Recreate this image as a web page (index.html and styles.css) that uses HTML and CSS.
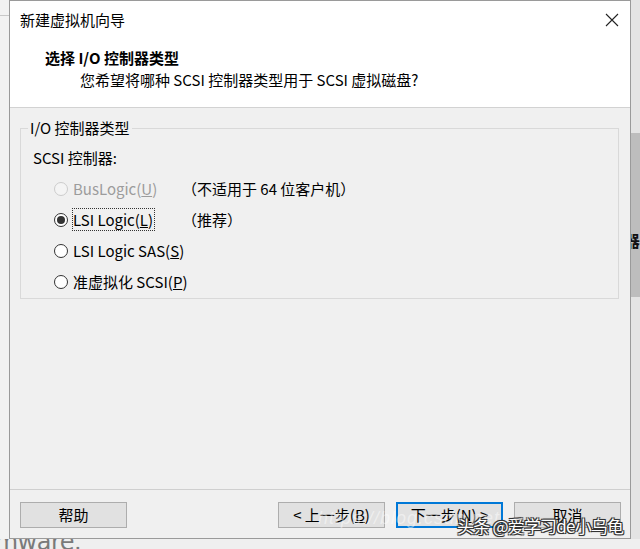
FILE: index.html
```html
<!DOCTYPE html>
<html lang="zh-CN">
<head>
<meta charset="utf-8">
<title>新建虚拟机向导</title>
<link rel="stylesheet" href="styles.css">
</head>
<body>
<div class="screen">
  <div class="top">
    <div class="side left"><div class="side-line"></div></div>
    <div class="dialog">
      <div class="titlebar">
        <span class="title">新建虚拟机向导</span>
        <svg class="close" width="14" height="14" viewBox="0 0 14 14"><path d="M1 1 L13 13 M13 1 L1 13" stroke="#222" stroke-width="1.1" fill="none"/></svg>
      </div>
      <div class="header">
        <div class="h-title">选择 I/O 控制器类型</div>
        <div class="h-sub">您希望将哪种 SCSI 控制器类型用于 SCSI 虚拟磁盘?</div>
      </div>
      <div class="body">
        <fieldset class="group">
          <legend class="legend">I/O 控制器类型</legend>
          <div class="label">SCSI 控制器:</div>
          <div class="row disabled">
            <span class="radio"></span>
            <span class="opt">BusLogic(<u>U</u>)</span>
            <span class="note">（不适用于 64 位客户机）</span>
          </div>
          <div class="row">
            <span class="radio checked"></span>
            <span class="opt"><span class="focus">LSI Logic(<u>L</u>)</span></span>
            <span class="note">（推荐）</span>
          </div>
          <div class="row">
            <span class="radio"></span>
            <span class="opt">LSI Logic SAS(<u>S</u>)</span>
            <span class="note"></span>
          </div>
          <div class="row">
            <span class="radio"></span>
            <span class="opt">准虚拟化 SCSI(<u>P</u>)</span>
            <span class="note"></span>
          </div>
        </fieldset>
      </div>
      <div class="footer">
        <button class="btn">帮助</button>
        <div class="btn-group">
          <button class="btn">&lt; 上一步(<u>B</u>)</button>
          <button class="btn default">下一步(<u>N</u>) &gt;</button>
          <button class="btn">取消</button>
        </div>
      </div>
    </div>
    <div class="side right">
      <div class="band"><span class="behind">器</span></div>
    </div>
  </div>
  <div class="bottom"><span class="vmware">vmware.</span></div>
  <div class="wm-faint">https://blog.csdn.net</div>
  <div class="watermark">头条 @爱学习de小乌龟</div>
</div>
</body>
</html>
```

FILE: styles.css
```css
* { box-sizing: border-box; }
html, body { margin: 0; padding: 0; }
body {
  font-family: "Noto Sans CJK SC", "Noto Sans", sans-serif;
  font-size: 15px;
  color: #000;
  background: #eeeeee;
}
.screen {
  position: relative;
  width: 640px;
  height: 549px;
  overflow: hidden;
  background: #eeeeee;
}
.top {
  display: flex;
  height: 539px;
}
.side {
  width: 9px;
  flex: none;
}
.side.left {
  background: #f2f2f2;
}
.side-line {
  margin-top: 15px;
  height: 1px;
  background: #c8c8c8;
}
.side.right {
  background: #e4e4e4;
  padding-top: 133px;
  overflow: hidden;
}
.band {
  height: 164px;
  background: #bdbdbd;
  padding-top: 98px;
  overflow: hidden;
}
.behind {
  display: block;
  margin-left: -7px;
  font-size: 16px;
  line-height: 18px;
  font-weight: bold;
  color: #111;
}
.dialog {
  width: 622px;
  flex: none;
  border: 1px solid #9a9a9a;
  background: #f0f0f0;
  display: flex;
  flex-direction: column;
}
.titlebar {
  height: 38px;
  background: #fff;
  display: flex;
  align-items: center;
  justify-content: space-between;
  padding: 0 11px 0 10px;
}
.title {
  font-size: 15px;
  line-height: 20px;
}
.close {
  display: block;
}
.header {
  height: 69px;
  background: #fff;
  border-bottom: 1px solid #d2d2d2;
  padding: 8px 0 0 35px;
}
.h-title {
  font-weight: bold;
  font-size: 15px;
  line-height: 22px;
}
.h-sub {
  padding-left: 35px;
  line-height: 22px;
}
.body {
  height: 381px;
  padding: 10px 11px 0 10px;
}
.group {
  margin: 0;
  border: 1px solid #d9d9d9;
  padding: 10px 12px 1px;
  min-width: 0;
}
.legend {
  padding: 0 2px;
  margin-left: -5px;
  line-height: 20px;
}
.label {
  line-height: 20px;
  margin-bottom: 5px;
}
.row {
  display: grid;
  grid-template-columns: 14px 110px auto;
  column-gap: 5px;
  align-items: center;
  height: 31px;
  margin-left: 21px;
}
.radio {
  width: 14px;
  height: 14px;
  border: 1px solid #333;
  border-radius: 50%;
  background: #fff;
  display: flex;
  align-items: center;
  justify-content: center;
}
.radio.checked::after {
  content: "";
  width: 8px;
  height: 8px;
  border-radius: 50%;
  background: #333;
}
.disabled .radio {
  border-color: #cccccc;
  background: #f4f4f4;
}
.disabled .opt {
  color: #9c9c9c;
}
.opt {
  white-space: nowrap;
  line-height: 20px;
}
.focus {
  outline: 1px dotted #333;
  outline-offset: 0;
  padding: 0 1px 0 0;
}
.note {
  white-space: nowrap;
  line-height: 20px;
  margin-left: -6px;
}
.footer {
  height: 49px;
  border-top: 1px solid #cfcfcf;
  padding: 12px 9px 0 10px;
  display: flex;
  justify-content: space-between;
  align-items: flex-start;
}
.btn-group {
  display: flex;
  gap: 11px;
}
.btn {
  width: 107px;
  height: 26px;
  margin: 0;
  padding: 0;
  font-family: "Noto Sans CJK SC", "Noto Sans", sans-serif;
  font-size: 15px;
  line-height: 22px;
  color: #000;
  background: #e1e1e1;
  border: 1px solid #adadad;
  border-radius: 0;
}
.btn.default {
  border: 1px solid #0078d7;
  box-shadow: inset 0 0 0 1px #0078d7;
}
.bottom {
  height: 10px;
  overflow: hidden;
  background: #efefef;
}
.vmware {
  display: block;
  font-family: "DejaVu Sans", "Liberation Sans", sans-serif;
  font-size: 24px;
  line-height: 24px;
  margin-top: -9px;
  margin-left: -19px;
  color: #7a7a7a;
  letter-spacing: -0.5px;
}
.wm-faint {
  position: absolute;
  left: 318px;
  top: 508px;
  font-family: "Liberation Sans", Arial, sans-serif;
  font-size: 18px;
  font-style: italic;
  color: rgba(255, 255, 255, 0.45);
  letter-spacing: 1px;
}
.watermark {
  position: absolute;
  left: 457px;
  top: 514px;
  font-family: "Noto Sans CJK SC", sans-serif;
  font-size: 17px;
  line-height: 24px;
  letter-spacing: -0.8px;
  color: #fff;
  white-space: nowrap;
  text-shadow: -1px -1px 0 #333, 1px -1px 0 #333, -1px 1px 0 #333, 1px 1px 0 #333, 0 0 2px #000;
}
```
